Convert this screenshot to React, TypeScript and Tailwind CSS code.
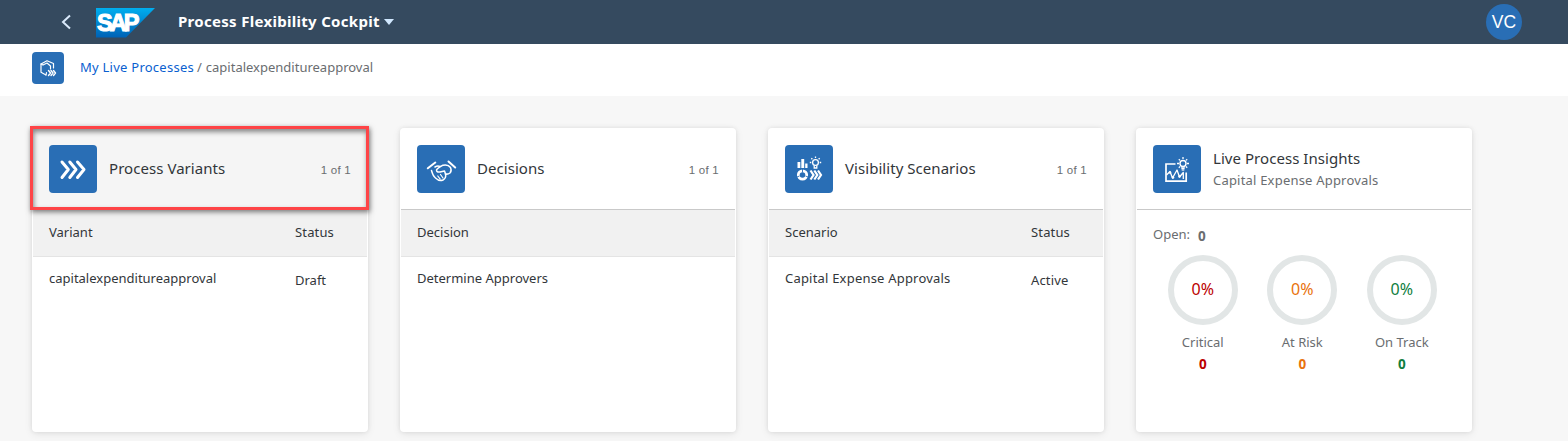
import type { ReactNode } from "react";

function SapLogo() {
  return (
    <svg width="60" height="30" viewBox="0 0 60 30" className="block">
      <defs>
        <linearGradient id="sap" x1="0" y1="0" x2="0" y2="1">
          <stop offset="0" stopColor="#00aeef" />
          <stop offset="1" stopColor="#0062b5" />
        </linearGradient>
      </defs>
      <path d="M0 0H59L30 29.500H0Z" fill="url(#sap)" />
      <text
        x="1"
        y="23"
        textLength="42.500"
        lengthAdjust="spacing"
        fill="#fff"
        stroke="#fff"
        strokeWidth="1.100"
        className="font-['Liberation_Sans',sans-serif] text-[23.500px] font-bold"
      >
        SAP
      </text>
    </svg>
  );
}

function ProcessIcon() {
  return (
    <svg width="32" height="32" viewBox="0 0 32 32" fill="none" stroke="#fff" strokeWidth="1.2" strokeLinejoin="round" strokeLinecap="round">
      <path d="M14 23L9 20.300V12L15 8.800L21.500 11.500V16" />
      <path d="M11 13L15 11L18.500 14V17M9 12L11 13M14 23L14.500 20.500" />
      <path d="M16.500 18.500L18.500 21L16.500 23.500M19 18.500L21 21L19 23.500M21.500 18.500L23.500 21L21.500 23.500" strokeWidth="1.400" />
    </svg>
  );
}

function VariantsIcon() {
  return (
    <svg width="48" height="48" viewBox="0 0 48 48" fill="none" stroke="#fff" strokeWidth="3" strokeLinejoin="round" strokeLinecap="round">
      <path d="M13 17L19.300 24.500L13 32.500M20.800 17L27 24.500L20.800 32.500M28.500 17L35 24.500L28.500 32.500" />
    </svg>
  );
}

function DecisionsIcon() {
  return (
    <svg width="48" height="48" viewBox="0 0 48 48" fill="none" stroke="#fff" strokeWidth="1.500" strokeLinejoin="round" strokeLinecap="round">
      <path d="M10.800 23.300L18.300 17.500M31.500 16.500L38.200 22.500" strokeWidth="2" />
      <path d="M14.500 25.500Q16 31 18.500 33Q22 36.500 26 35Q29.500 33 28.500 29" />
      <path d="M28.500 29L27.500 26L23 27Q19.500 27.500 19.500 25Q20 23.500 26 20.200Q31 19 33.500 22.500Q35 26 33 28Q31 29.500 28.500 29M18 22Q20.500 20.500 23 21.500" />
      <path d="M20.800 31L23.200 34.200M23.500 29.500L26 33" strokeWidth="1.200" />
    </svg>
  );
}

function VisibilityIcon() {
  return (
    <svg width="48" height="48" viewBox="0 0 48 48" fill="none" stroke="#fff">
      <path d="M12.500 17H15.300V23H12.500ZM16.300 14H19.200V23H16.300ZM20.200 18.500H22.500V23H20.200Z" fill="#fff" stroke="none" />
      <circle cx="17.500" cy="30" r="4.200" strokeWidth="2.800" />
      <path d="M17.500 24V27.500M12 32L14.500 31M23 32L20.500 31" stroke="#296eb5" strokeWidth="0.900" />
      <circle cx="30.500" cy="17.500" r="2.900" strokeWidth="1.300" />
      <path d="M29.200 20.500V23H31.800V20.500M30.500 11.500V13M24.800 17.500H26.300M34.700 17.500H36.200M26.300 13.200L27.400 14.300M34.700 13.200L33.600 14.300" strokeWidth="1.300" />
      <path d="M25.500 25.500L28.500 30L25.500 34.500M29.300 25.500L32.300 30L29.300 34.500M33 25.500L36 30L33 34.500" strokeWidth="2.200" />
    </svg>
  );
}

function InsightsIcon() {
  return (
    <svg width="48" height="48" viewBox="0 0 48 48" fill="none" stroke="#fff">
      <path d="M22.500 19H13V36.200H33.200V27.500" strokeWidth="1.700" />
      <path d="M13.500 30L17 26.500L19.500 33L24 25L26.500 32L30.300 27.500V34" strokeWidth="1.300" strokeLinejoin="round" />
      <circle cx="17" cy="27.500" r="1.300" fill="#fff" stroke="none" />
      <circle cx="20" cy="32.500" r="1.300" fill="#fff" stroke="none" />
      <circle cx="26.500" cy="31.500" r="1.200" fill="#fff" stroke="none" />
      <circle cx="30" cy="18.500" r="3" strokeWidth="1.400" />
      <path d="M29 21.500V23.500H31V21.500M30 12V14M24 18.500H26M34 18.500H36M25.800 14.200L27 15.400M34.200 14.200L33 15.400M25.800 22.700L27 21.500M34.200 22.700L33 21.500" strokeWidth="1.300" />
      <path d="M28.700 25H31.300" strokeWidth="1.200" />
    </svg>
  );
}

function Card({ icon, title, subtitle, count, shaded, children }: {
  icon: ReactNode;
  title: ReactNode;
  subtitle?: string;
  count?: string;
  shaded?: boolean;
  children: ReactNode;
}) {
  return (
    <section className="relative h-[304px] w-[336px] rounded bg-white px-px shadow-[0_0_4px_rgba(0,0,0,0.08),0_2px_8px_rgba(0,0,0,0.08)]">
      <header className={`flex h-[82px] border-b border-[#c9c9c9] pt-[17px] pr-4 pl-4 ${shaded ? "bg-[#f5f5f5]" : ""}`}>
        <div className="size-12 shrink-0 rounded bg-[#296eb5]">{icon}</div>
        <div className={`ml-3 flex-1 ${subtitle ? "pt-[3px]" : "pt-[13px]"}`}>
          <h2 className="text-[15px] leading-5 tracking-[0.05px] text-[#32363a]">{title}</h2>
          {subtitle && <p className="mt-0.5 text-[13px] leading-5 tracking-[0.2px] text-[#6a6d70]">{subtitle}</p>}
        </div>
        {count && <span className="pt-[15px] font-['Liberation_Sans',sans-serif] text-[11.500px] leading-5 tracking-[0.25px] text-[#6a6d70]">{count}</span>}
      </header>
      {children}
      {shaded && (
        <div className="absolute -top-0.5 -left-0.5 h-[84px] w-[339px] border-[3px] border-[#fe4447] shadow-[1px_2px_5px_rgba(0,0,0,0.5),inset_1px_3px_5px_rgba(0,0,0,0.45)]" />
      )}
    </section>
  );
}

function Table({ head, row }: { head: ReactNode[]; row: ReactNode[] }) {
  return (
    <div className="text-[13px] leading-5 text-[#32363a]">
      <div className="flex h-[47px] border-b border-[#e4e4e4] bg-[#f1f1f1] pt-3 pl-4">
        <span className="w-[246px]">{head[0]}</span>
        <span className="tracking-[0.15px]">{head[1]}</span>
      </div>
      <div className="flex pt-[11px] pl-4">
        <span className="w-[246px]">{row[0]}</span>
        <span className="pt-0.5">{row[1]}</span>
      </div>
    </div>
  );
}

function Gauge({ label, color }: { label: string; color: string }) {
  return (
    <div className="flex w-[99.500px] flex-col items-center text-[13px] leading-5">
      <div className={`flex size-[70px] items-center justify-center rounded-full border-[6px] border-[#e2e6e6] pb-0.5 text-[16px] ${color}`}>0%</div>
      <span className="mt-[7px] text-[#6a6d70]">{label}</span>
      <span className={`mt-0.5 text-[13.500px] font-bold ${color}`}>0</span>
    </div>
  );
}

export default function App() {
  return (
    <div className="h-[441px] w-[1568px] overflow-hidden bg-[#f7f7f7] font-['Noto_Sans','Liberation_Sans',sans-serif]">
      <header className="flex h-11 items-center bg-[#354a5f] pr-[46px] pl-[61px]">
        <svg width="10" height="16" viewBox="0 0 10 16" fill="none" stroke="#d9e9fa" strokeWidth="2">
          <path d="M9 1.500L2 8L9 14.500" />
        </svg>
        <div className="ml-[25px] pt-px"><SapLogo /></div>
        <h1 className="ml-[22px] w-[201px] pb-0.5 text-[15px] leading-5 font-bold tracking-[0.3px] whitespace-nowrap text-white">Process Flexibility Cockpit</h1>
        <svg width="10" height="6" viewBox="0 0 10 6" className="ml-[5px]"><path d="M0 0H10L5 6Z" fill="#d1e8ff" /></svg>
        <div className="ml-auto flex size-9 items-center justify-center rounded-full bg-[#296eb5] font-['Liberation_Sans',sans-serif] text-[17.500px] text-white">VC</div>
      </header>
      <nav className="flex h-[52px] bg-white pt-2 pl-8">
        <div className="size-8 rounded bg-[#296eb5]"><ProcessIcon /></div>
        <div className="ml-4 flex pt-[5px] text-[13px] leading-5 text-[#6a6d70]">
          <a className="tracking-[0.25px] text-[#0a5fd0]">My Live Processes</a>
          <span className="mr-1 ml-[3px]">/</span>
          <span>capitalexpenditureapproval</span>
        </div>
      </nav>
      <main className="flex gap-8 pt-8 pl-8">
        <Card shaded icon={<VariantsIcon />} title="Process Variants" count="1 of 1">
          <Table head={["Variant", "Status"]} row={["capitalexpenditureapproval", "Draft"]} />
        </Card>
        <Card icon={<DecisionsIcon />} title="Decisions" count="1 of 1">
          <Table head={["Decision"]} row={["Determine Approvers"]} />
        </Card>
        <Card icon={<VisibilityIcon />} title="Visibility Scenarios" count="1 of 1">
          <Table
            head={["Scenario", "Status"]}
            row={[<span className="tracking-[0.2px]">Capital Expense Approvals</span>, <span className="tracking-[0.15px]">Active</span>]}
          />
        </Card>
        <Card icon={<InsightsIcon />} title="Live Process Insights" subtitle="Capital Expense Approvals">
          <div className="flex h-9 pt-[14px] pl-4 text-[13px] leading-5 text-[#6a6d70]">
            <span>Open:</span>
            <span className="ml-2 pt-0.5 text-[13.500px] font-bold">0</span>
          </div>
          <div className="mt-[9px] flex pl-[16px]">
            <Gauge label="Critical" color="text-[#bb0000]" />
            <Gauge label="At Risk" color="text-[#e9730c]" />
            <Gauge label="On Track" color="text-[#107e3e]" />
          </div>
        </Card>
      </main>
    </div>
  );
}
